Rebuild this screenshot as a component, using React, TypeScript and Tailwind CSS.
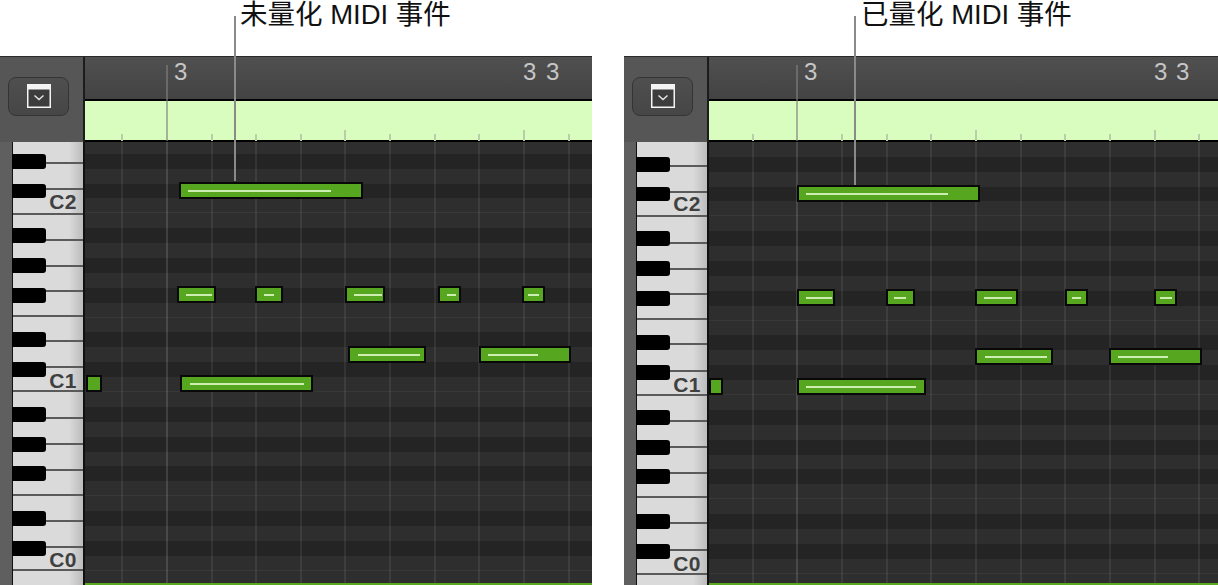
import React from "react";

type Note = [number, number, number, number, number, number]; // x0, x1, y0, y1, lineX0, lineX1 in page coordinates

type PanelData = {
  origin: number;
  label: string;
  labelPad: string;
  calloutLeft: string;
  calloutHeight: string;
  panelClass: string;
  rowsMargin: string;
  gridStart: number;
  bars: number[];
  keyBottoms: number[];
  notes: Note[];
};

const ROWS = ["F","E","D#","D","C#","C","B","A#","A","G#","G","F#"];
const ROW_COUNT = 31;
const KEY_LABELS: Record<number, string> = { 2: "C2", 9: "C1", 16: "C0" };

const panels: PanelData[] = [
  {
    origin: 0,
    label: "未量化 MIDI 事件",
    labelPad: "pl-[240px]",
    calloutLeft: "left-[234px]",
    calloutHeight: "h-[165px]",
    panelClass: "w-[592px]",
    rowsMargin: "-mt-[18px]",
    gridStart: 121.2,
    bars: [174, 523, 546],
    keyBottoms: [164, 190, 215, 241, 267, 292, 317, 342, 368, 392.3, 419, 445, 471, 495.6, 522, 548, 571, 597],
    notes: [
      [179, 363, 182, 199, 188, 331],
      [177, 216, 286, 303, 186, 212],
      [255, 283, 286, 303, 264, 274],
      [345, 385, 286, 303, 354, 382],
      [438, 461, 286, 303, 447, 456],
      [522, 545, 286, 303, 528, 539],
      [348, 426, 346, 363, 358, 420],
      [479, 571, 346, 363, 488, 538],
      [86, 102, 375, 392, 0, 0],
      [180, 313, 375, 392, 190, 304],
    ],
  },
  {
    origin: 624,
    label: "已量化 MIDI 事件",
    labelPad: "pl-[237px]",
    calloutLeft: "left-[230px]",
    calloutHeight: "h-[169px]",
    panelClass: "flex-1",
    rowsMargin: "-mt-[15px]",
    gridStart: 751.7,
    bars: [804, 1154, 1176],
    keyBottoms: [166.7, 192.7, 217.3, 243.7, 269.7, 294.7, 319.7, 344.7, 371.7, 395.7, 421.7, 447.7, 474, 497.7, 524, 550.7, 575, 601],
    notes: [
      [797, 980, 185, 202, 806, 948],
      [797, 835, 289, 306, 806, 832],
      [886, 915, 289, 306, 894, 906],
      [975, 1018, 289, 306, 984, 1012],
      [1065, 1088, 289, 306, 1072, 1081],
      [1154, 1177, 289, 306, 1160, 1172],
      [975, 1053, 348, 365, 985, 1047],
      [1109, 1202, 348, 365, 1118, 1168],
      [709, 723, 378, 395, 0, 0],
      [797, 926, 378, 395, 806, 916],
    ],
  },
];

function MenuIcon() {
  return (
    <svg width="24" height="24" viewBox="0 0 24 24">
      <rect x="0.75" y="0.75" width="22.5" height="22.5" fill="#3d3d3d" stroke="#f4f4f4" strokeWidth="1.5" />
      <rect x="0" y="0" width="24" height="5.5" fill="#f4f4f4" />
      <path d="M7.5 11.5 L12 15.5 L16.5 11.5" fill="none" stroke="#e8e8e8" strokeWidth="1.4" />
    </svg>
  );
}

function Ruler({ p }: { p: PanelData }) {
  const xs = Array.from({ length: 11 }, (_, i) => p.gridStart + i * 44.65 - p.origin - 85);
  return (
    <div className="relative flex-1 flex flex-col min-w-0">
      <div className="h-[43px] bg-gradient-to-b from-[#505050] to-[#434343] border-b-2 border-black box-content" />
      <div className="h-[39px] bg-[#d8fdbf]" />
      <div className="h-[2px] bg-black" />
      {xs.map((x, i) =>
        i === 1 ? (
          <div key={i} className="absolute top-[8px] h-[76px] w-[2px] bg-[#808080]/60" style={{ left: x }} />
        ) : (
          <div
            key={i}
            className={
              i === 5 || i === 9
                ? "absolute top-[73px] h-[11px] w-[2px] bg-[#b9cea8]"
                : "absolute top-[77px] h-[7px] w-[2px] bg-[#b9cea8]"
            }
            style={{ left: x }}
          />
        )
      )}
      {p.bars.map((x, i) => (
        <span
          key={i}
          className="absolute top-[1px] text-[24px] leading-[28px] text-[#c6c6c6] font-['Liberation_Sans',sans-serif]"
          style={{ left: x - p.origin - 85 }}
        >
          3
        </span>
      ))}
    </div>
  );
}

function Piano({ p }: { p: PanelData }) {
  const heights = p.keyBottoms.map((b, i) => b - (i === 0 ? b - 25.5 : p.keyBottoms[i - 1]));
  const blackRows = Array.from({ length: ROW_COUNT }, (_, i) => i).filter((i) => ROWS[i % 12].includes("#"));
  const firstKeyTop = p.keyBottoms[0] - 25.5 - 142;
  return (
    <div className="relative w-[85px] shrink-0 h-full overflow-hidden flex bg-[#5f5f5f]">
      <div className="w-[12px] shrink-0" />
      <div className="flex-1 border-l border-r-[2px] border-l-[#111] border-r-[#111] bg-[#d9d9da] relative">
        <div className="absolute left-0 right-0 flex flex-col" style={{ top: firstKeyTop }}>
          {heights.map((h, i) => (
            <div
              key={i}
              className="relative shrink-0 flex items-end justify-end pr-[6px] pb-[1px] border-b-2 border-[#5a5a5a] bg-gradient-to-r from-[#dadadb] from-80% to-[#bcbcbc]"
              style={{ height: h }}
            >
              {KEY_LABELS[i] && (
                <span
                  className={
                    i === 2
                      ? "mb-[2px] text-[21px] leading-[16px] tracking-[0.5px] font-bold text-[#404040] font-['Liberation_Sans',sans-serif]"
                      : "text-[21px] leading-[16px] tracking-[0.5px] font-bold text-[#404040] font-['Liberation_Sans',sans-serif]"
                  }
                >
                  {KEY_LABELS[i]}
                </span>
              )}
            </div>
          ))}
        </div>
      </div>
      <div className={`absolute left-[12px] top-0 ${p.rowsMargin} flex flex-col`}>
        {Array.from({ length: ROW_COUNT }, (_, i) => (
          <div key={i} className="h-[14.9px] w-[34px] flex">
            {blackRows.includes(i) && <div className="w-full h-full bg-black rounded-r-[3px]" />}
          </div>
        ))}
      </div>
    </div>
  );
}

function Canvas({ p }: { p: PanelData }) {
  const xs = Array.from({ length: 11 }, (_, i) => p.gridStart + i * 44.65 - p.origin - 85);
  return (
    <div className="relative flex-1 min-w-0 h-full flex flex-col overflow-hidden bg-[#2e2e2e]">
      <div className="flex-1 min-h-0 overflow-hidden">
        <div className={`flex flex-col ${p.rowsMargin}`}>
          {Array.from({ length: ROW_COUNT }, (_, i) => {
            const n = ROWS[i % 12];
            const dark = n.includes("#");
            const edge = n === "C" || n === "F";
            return (
              <div
                key={i}
                className={
                  dark
                    ? "h-[14.9px] shrink-0 bg-[#242424]"
                    : edge
                    ? "h-[14.9px] shrink-0 bg-[#2e2e2e] border-b border-[#383838]"
                    : "h-[14.9px] shrink-0 bg-[#2e2e2e]"
                }
              />
            );
          })}
        </div>
      </div>
      <div className="h-[2px] shrink-0 bg-[#59a820]" />
      {xs.map((x, i) => (
        <div
          key={i}
          className={
            i === 1
              ? "absolute top-0 bottom-[2px] w-[2px] bg-white/[0.13]"
              : "absolute top-0 bottom-[2px] w-[2px] bg-white/[0.07]"
          }
          style={{ left: x }}
        />
      ))}
      {p.notes.map(([x0, x1, y0, y1, l0, l1], i) => (
        <div
          key={i}
          className="absolute flex items-center border-2 border-[#080808] bg-[#56a61f]"
          style={{ left: x0 - p.origin - 85, width: x1 - x0, top: y0 - 142, height: y1 - y0 }}
        >
          {l1 > 0 && (
            <div className="h-[2px] bg-[#cdeeb0]" style={{ marginLeft: l0 - x0 - 2, width: l1 - l0 }} />
          )}
        </div>
      ))}
    </div>
  );
}

function Panel({ p }: { p: PanelData }) {
  return (
    <div className={`relative ${p.panelClass} flex flex-col min-w-0`}>
      <div className={`h-[56px] shrink-0 ${p.labelPad}`}>
        <span className="block text-[27.5px] leading-[30px] text-[#111] whitespace-nowrap font-['Liberation_Sans','Noto_Sans_CJK_SC',sans-serif]">
          {p.label}
        </span>
      </div>
      <div className="h-[86px] shrink-0 flex border-t-[1.5px] border-[#2a2a2a]">
        <div className="w-[85px] shrink-0 bg-[#565656] border-r-2 border-[#1c1c1c] flex flex-col pl-[8px] pt-[19.5px]">
          <div className="w-[61px] h-[39px] rounded-[8px] border border-[#343434] bg-gradient-to-b from-[#4f4f4f] to-[#464646] flex items-center justify-center">
            <MenuIcon />
          </div>
          <div className="flex-1" />
        </div>
        <Ruler p={p} />
      </div>
      <div className="flex-1 min-h-0 flex">
        <Piano p={p} />
        <Canvas p={p} />
      </div>
      <div className={`absolute ${p.calloutLeft} top-[16px] w-[2px] ${p.calloutHeight} bg-[#8a8a8a] z-20`} />
    </div>
  );
}

export default function App() {
  return (
    <div className="w-[1218px] h-[585px] bg-white flex gap-[32px] overflow-hidden">
      {panels.map((p) => (
        <Panel key={p.origin} p={p} />
      ))}
    </div>
  );
}
